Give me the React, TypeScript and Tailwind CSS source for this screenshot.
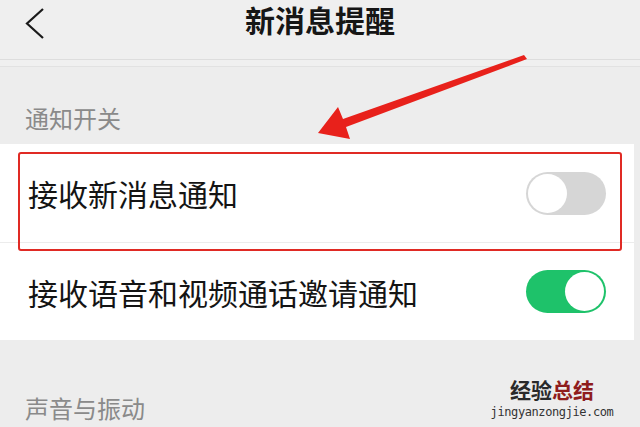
import React from "react";

const cjk = { fontFamily: '"Noto Sans CJK SC", "Noto Sans", sans-serif' };

function Toggle({ on }: { on: boolean }) {
  return (
    <div
      className={`relative w-[80px] h-[43px] rounded-full ${
        on ? "bg-[#1ec26a]" : "bg-[#d6d6d6]"
      }`}
    >
      <div
        className={`absolute top-[2px] w-[39px] h-[39px] rounded-full bg-white ${
          on ? "right-[2px]" : "left-[2px]"
        }`}
      />
    </div>
  );
}

function Arrow() {
  return (
    <svg
      className="absolute inset-0 pointer-events-none"
      width={640}
      height={427}
      viewBox="0 0 640 427"
    >
      <polygon
        points="318,133 338,107 343,119 524,55 527,59 346,127 350,139"
        fill="#e8211b"
      />
    </svg>
  );
}

export default function App() {
  return (
    <div className="relative w-[640px] h-[427px] overflow-hidden bg-[#ededed]" style={cjk}>
      {/* header */}
      <div className="relative h-[60px] bg-[#efefef] border-b border-[#dddddd] flex items-start justify-center">
        <svg className="absolute left-[25px] top-[8px]" width={20} height={31} viewBox="0 0 20 31">
          <polyline points="18,1 2,15.5 18,30" fill="none" stroke="#1a1a1a" strokeWidth={2.2} />
        </svg>
        <span className="text-[30px] leading-[38px] font-bold text-[#161616]">新消息提醒</span>
      </div>
      <div className="h-[7px] border-b border-[#e2e2e2] bg-[#f0f0f0]" />

      {/* section label */}
      <div className="h-[77px] flex items-end pb-[14px] pl-[25px]">
        <span className="text-[24px] leading-none text-[#8a8a8a]">通知开关</span>
      </div>

      {/* switches */}
      <div className="relative bg-white mr-[6px]">
        <div className="h-[99px] flex items-center justify-between pl-[28px] pr-[28px] border-b border-[#ececec]">
          <span className="text-[30px] leading-none text-[#141414]">接收新消息通知</span>
          <Toggle on={false} />
        </div>
        <div className="h-[97px] flex items-center justify-between pl-[28px] pr-[28px]">
          <span className="text-[30px] leading-none text-[#141414]">接收语音和视频通话邀请通知</span>
          <Toggle on={true} />
        </div>
        <div className="absolute left-[18px] top-[8px] w-[604px] h-[99px] border-[2.5px] border-[#e02a24] rounded-[3px]" />
      </div>

      {/* next section */}
      <div className="h-[85px] flex items-end pb-[5px] pl-[25px]">
        <span className="text-[24px] leading-none text-[#8a8a8a]">声音与振动</span>
      </div>

      {/* watermark */}
      <div className="absolute left-[490px] top-[379px] w-[124px] flex flex-col items-center">
        <div className="text-[21px] leading-none font-bold text-[#2a2a2a]">
          经验<span className="text-[#8f1d1d]">总结</span>
        </div>
        <div
          className="mt-[6px] text-[12px] leading-none tracking-[-0.4px] text-[#333]"
          style={{ fontFamily: '"DejaVu Sans Mono", monospace' }}
        >
          jingyanzongjie.com
        </div>
      </div>

      <Arrow />
    </div>
  );
}
